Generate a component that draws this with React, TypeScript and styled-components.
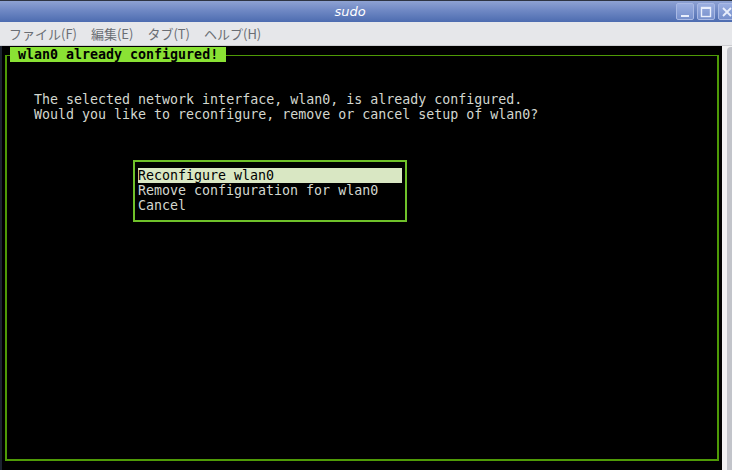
import styled, { createGlobalStyle } from 'styled-components';

const GlobalStyle = createGlobalStyle`
  html, body {
    margin: 0;
    padding: 0;
    background: #000;
  }
`;

const MONO = `'DejaVu Sans Mono', 'Liberation Mono', monospace`;

const App: React.FC = () => {
  return (
    <Window>
      <GlobalStyle />
      <TitleBar>
        <Title>sudo</Title>
        <WindowButtons>
          <WinButton aria-label="minimize">
            <svg width="12" height="12" viewBox="0 0 12 12">
              <rect x="2" y="9" width="8" height="2" fill="#e8eefc" />
            </svg>
          </WinButton>
          <WinButton aria-label="maximize">
            <svg width="12" height="12" viewBox="0 0 12 12">
              <rect x="1.5" y="1.5" width="9" height="9" fill="none" stroke="#e8eefc" strokeWidth="1.4" />
              <rect x="1.5" y="1.5" width="9" height="1.5" fill="#e8eefc" />
            </svg>
          </WinButton>
          <WinButton aria-label="close">
            <svg width="12" height="12" viewBox="0 0 12 12">
              <path d="M2 2 L10 10 M10 2 L2 10" stroke="#e8eefc" strokeWidth="1.8" />
            </svg>
          </WinButton>
        </WindowButtons>
      </TitleBar>
      <MenuBar>
        <MenuItem>ファイル(F)</MenuItem>
        <MenuItem>編集(E)</MenuItem>
        <MenuItem>タブ(T)</MenuItem>
        <MenuItem>ヘルプ(H)</MenuItem>
      </MenuBar>
      <Body>
        <Terminal>
          <Frame>
            <FrameTitle>&nbsp;wlan0 already configured!&nbsp;</FrameTitle>
            <Message>
              <Line>The selected network interface, wlan0, is already configured.</Line>
              <Line>Would you like to reconfigure, remove or cancel setup of wlan0?</Line>
            </Message>
            <MenuBox>
              <Option $selected>Reconfigure wlan0</Option>
              <Option>Remove configuration for wlan0</Option>
              <Option>Cancel</Option>
            </MenuBox>
          </Frame>
        </Terminal>
        <Gutter />
        <ScrollTrack>
          <ScrollThumb />
        </ScrollTrack>
      </Body>
    </Window>
  );
};

const Window = styled.div`
  width: 732px;
  height: 470px;
  display: flex;
  flex-direction: column;
  overflow: hidden;
  background: #e6e7ea;
`;

const TitleBar = styled.div`
  height: 21px;
  flex-shrink: 0;
  display: flex;
  align-items: center;
  border-top: 1px solid #2e3442;
  background: linear-gradient(to bottom, #8ea2d3 0%, #6f88c4 45%, #4d6cb0 100%);
`;

const Title = styled.div`
  flex: 1;
  padding-left: 24px;
  text-align: center;
  color: #ffffff;
  font-family: 'DejaVu Sans', 'Liberation Sans', sans-serif;
  font-style: italic;
  font-size: 13px;
`;

const WindowButtons = styled.div`
  display: flex;
  gap: 3px;
  margin-right: -4px;
`;

const WinButton = styled.div`
  width: 18px;
  height: 17px;
  box-sizing: border-box;
  display: flex;
  align-items: center;
  justify-content: center;
  border: 1px solid #a9b9e4;
  border-radius: 2px;
  background: linear-gradient(to bottom, #9aaee0, #7790cc);
`;

const MenuBar = styled.div`
  height: 23px;
  flex-shrink: 0;
  display: flex;
  align-items: center;
  gap: 14px;
  padding-left: 9px;
  background: #e6e7ea;
  border-bottom: 1px solid #cdced2;
`;

const MenuItem = styled.span`
  color: #6a6e74;
  font-family: 'Noto Sans CJK JP', 'DejaVu Sans', sans-serif;
  font-size: 13px;
`;

const Body = styled.div`
  flex: 1;
  display: flex;
  min-height: 0;
`;

const Terminal = styled.div`
  width: 720px;
  flex-shrink: 0;
  background: #000;
  border-left: 2px solid #1c2330;
  padding-top: 9px;
  font-family: ${MONO};
  font-size: 13.3px;
  line-height: 15px;
  color: #d3d7cf;
`;

const Frame = styled.div`
  position: relative;
  box-sizing: border-box;
  width: 714px;
  height: 406px;
  margin-left: 3px;
  border: 2px solid #4e9a06;
  border-top-width: 1px;
  padding: 36px 0 0 27px;
`;

const FrameTitle = styled.div`
  position: absolute;
  left: 3px;
  top: -9px;
  height: 15px;
  background: #8ae234;
  color: #000;
  font-weight: bold;
  white-space: pre;
`;

const Message = styled.div`
  display: flex;
  flex-direction: column;
`;

const Line = styled.div`
  height: 15px;
  white-space: pre;
`;

const MenuBox = styled.div`
  width: 274px;
  box-sizing: border-box;
  margin: 38px 0 0 99px;
  border: 2px solid #6fc12a;
  padding: 6px 3px 7px 3px;
  display: flex;
  flex-direction: column;
`;

const Option = styled.div<{ $selected?: boolean }>`
  height: 15px;
  white-space: pre;
  background: ${({ $selected }) => ($selected ? '#d9e7c3' : 'transparent')};
  color: ${({ $selected }) => ($selected ? '#000' : '#d3d7cf')};
`;

const Gutter = styled.div`
  width: 5px;
  flex-shrink: 0;
  background: #f2f2f3;
`;

const ScrollTrack = styled.div`
  flex: 1;
  background: #f2f2f3;
  padding-top: 1px;
  display: flex;
`;

const ScrollThumb = styled.div`
  flex: 1;
  background: #c2c4ca;
  border-top-left-radius: 4px;
`;

export default App;
